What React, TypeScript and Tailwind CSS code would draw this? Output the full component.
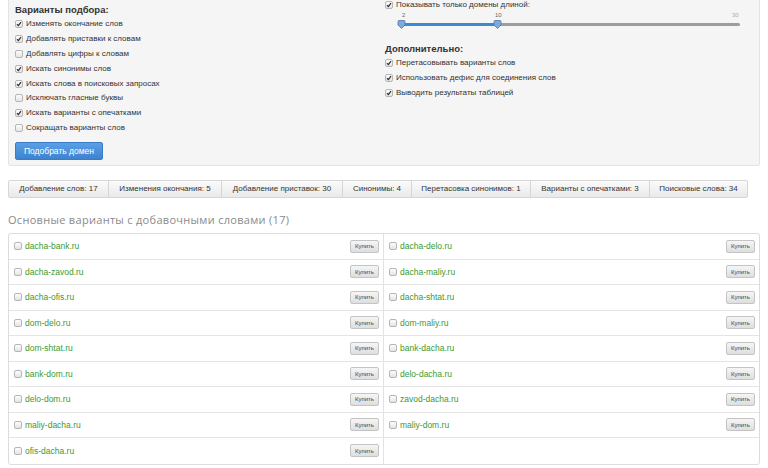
import React from "react";

const font = { fontFamily: '"Liberation Sans", Arial, sans-serif' };
const headFont = { fontFamily: '"Open Sans", "Noto Sans", sans-serif' };

function Check({ checked }: { checked?: boolean }) {
  return (
    <span className="inline-flex h-[8px] w-[8px] shrink-0 items-center justify-center rounded-[2px] border border-[#b5b5b5] bg-gradient-to-b from-[#fdfdfd] to-[#e4e4e4]">
      {checked && (
        <svg width="6" height="6" viewBox="0 0 6 6">
          <path d="M1 3.2 L2.4 4.6 L5 1.2" fill="none" stroke="#333" strokeWidth="1.3" />
        </svg>
      )}
    </span>
  );
}

function CheckRow({ label, checked, h = "h-[14.8px]" }: { label: string; checked?: boolean; h?: string }) {
  return (
    <div className={`flex items-center gap-[3px] ${h}`}>
      <Check checked={checked} />
      <span className="text-[8px] leading-none text-[#333]">{label}</span>
    </div>
  );
}

function Handle() {
  return (
    <svg width="9" height="9" viewBox="0 0 9 9" className="absolute top-[-3px]">
      <path d="M1 1.5 Q1 0.5 2 0.5 H7 Q8 0.5 8 1.5 V5 L4.5 8.5 L1 5 Z" fill="#7fa9d8" stroke="#4a79b8" strokeWidth="0.8" />
    </svg>
  );
}

const left = [
  ["Изменять окончание слов", true],
  ["Добавлять приставки к словам", true],
  ["Добавлять цифры к словам", false],
  ["Искать синонимы слов", true],
  ["Искать слова в поисковых запросах", true],
  ["Исключать гласные буквы", false],
  ["Искать варианты с опечатками", true],
  ["Сокращать варианты слов", false],
] as const;

const stats: [string, string][] = [
  ["Добавление слов: 17", "w-[99px]"],
  ["Изменения окончания: 5", "w-[113px]"],
  ["Добавление приставок: 30", "w-[121px]"],
  ["Синонимы: 4", "w-[69px]"],
  ["Перетасовка синонимов: 1", "w-[119px]"],
  ["Варианты с опечатками: 3", "w-[119px]"],
  ["Поисковые слова: 34", "w-[98px]"],
];

const rows: [string, string | null][] = [
  ["dacha-bank.ru", "dacha-delo.ru"],
  ["dacha-zavod.ru", "dacha-maliy.ru"],
  ["dacha-ofis.ru", "dacha-shtat.ru"],
  ["dom-delo.ru", "dom-maliy.ru"],
  ["dom-shtat.ru", "bank-dacha.ru"],
  ["bank-dom.ru", "delo-dacha.ru"],
  ["delo-dom.ru", "zavod-dacha.ru"],
  ["maliy-dacha.ru", "maliy-dom.ru"],
  ["ofis-dacha.ru", null],
];

function Cell({ name, border }: { name: string | null; border?: boolean }) {
  return (
    <div className={`flex h-full items-center justify-between pl-[5px] pr-[4px] ${border ? "border-r border-[#e2e2e2]" : ""}`}>
      {name && (
        <>
          <div className="flex items-center gap-[3px]">
            <Check />
            <span className="text-[8.5px] leading-none text-[#3c9a2e]">{name}</span>
          </div>
          <button className="flex h-[13px] w-[29px] items-center justify-center rounded-[2px] border border-[#c4c4c4] bg-gradient-to-b from-[#f6f6f6] to-[#dedede] text-[6px] leading-none text-[#444]">
            Купить
          </button>
        </>
      )}
    </div>
  );
}

export default function App() {
  return (
    <div className="h-[468px] w-[768px] overflow-hidden bg-white" style={font}>
      <div className="mx-[8px] flex h-[166px] w-[752px] rounded-b-[3px] border border-t-0 border-[#e3e3e3] bg-[#f5f5f5]">
        <div className="flex w-[376px] flex-col pl-[6px] pt-[3px]">
          <div className="flex h-[14px] items-center text-[9.5px] font-bold leading-none text-[#333]">Варианты подбора:</div>
          {left.map(([l, c]) => (
            <CheckRow key={l} label={l} checked={c} />
          ))}
          <button className="mt-[7px] flex h-[18px] w-[88px] items-center justify-center rounded-[2px] border border-[#3a7cc4] bg-gradient-to-b from-[#5aa0e6] to-[#3d82cf] text-[8.5px] leading-none text-white">
            Подобрать домен
          </button>
        </div>
        <div className="flex flex-1 flex-col">
          <CheckRow label="Показывать только домены длиной:" checked h="h-[10px]" />
          <div className="relative ml-[13px] mt-[2px] h-[20px] w-[342px]">
            <span className="absolute left-[4px] top-0 text-[6px] leading-none text-[#666]">2</span>
            <span className="absolute left-[97px] top-0 text-[6px] leading-none text-[#666]">10</span>
            <span className="absolute left-[334px] top-0 text-[6px] leading-none text-[#aaa]">30</span>
            <div className="absolute left-0 right-0 top-[11px] h-[3px] rounded-full bg-[#9d9d9d]" />
            <div className="absolute left-0 top-[11px] h-[3px] w-[100px] rounded-full bg-[#3b8ad4]" />
            <div className="absolute left-[-1px] top-[11px]"><Handle /></div>
            <div className="absolute left-[95px] top-[11px]"><Handle /></div>
          </div>
          <div className="mt-[10px] flex h-[14px] items-center text-[9.5px] font-bold leading-none text-[#333]">Дополнительно:</div>
          <CheckRow label="Перетасовывать варианты слов" checked />
          <CheckRow label="Использовать дефис для соединения слов" checked />
          <CheckRow label="Выводить результаты таблицей" checked />
        </div>
      </div>

      <div className="ml-[8px] mt-[14px] flex h-[18px] w-fit rounded-[2px] border border-[#d6d6d6] bg-gradient-to-b from-[#fbfbfb] to-[#e9e9e9]">
        {stats.map(([s, w], i) => (
          <div key={s} className={`flex items-center justify-center whitespace-nowrap text-[8px] leading-none text-[#333] ${w} ${i > 0 ? "border-l border-[#d6d6d6]" : ""}`}>
            {s}
          </div>
        ))}
      </div>

      <div className="ml-[8px] mt-[16px] text-[11px] leading-none tracking-[0.3px] text-[#8a8a8a]" style={headFont}>
        Основные варианты с добавочными словами (17)
      </div>

      <div className="ml-[8px] mt-[8px] w-[752px] rounded-[3px] border border-[#dcdcdc]">
        {rows.map(([a, b], i) => (
          <div key={i} className={`grid h-[25.5px] grid-cols-2 ${i < rows.length - 1 ? "border-b border-[#e4e4e4]" : ""}`}>
            <Cell name={a} border />
            <Cell name={b} />
          </div>
        ))}
      </div>
    </div>
  );
}
